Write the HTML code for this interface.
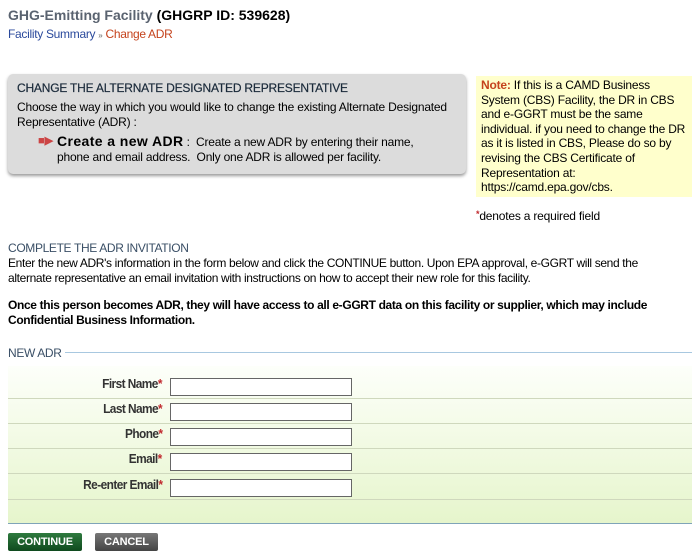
<!DOCTYPE html>
<html><head><style>
body{margin:0;width:700px;height:560px;background:#fff;font-family:"Liberation Sans",sans-serif;font-size:12px;color:#000;position:relative;overflow:hidden}
.a{position:absolute;white-space:nowrap}
.n{letter-spacing:-0.35px}
.star{color:#c0282d;font-weight:bold}
.row{position:absolute;left:8px;width:684px;height:25px;border-bottom:1px solid #cfd8bd}
.lbl{position:absolute;right:530px;top:4px;font-weight:bold;color:#333;letter-spacing:-0.6px;font-size:12.5px;transform:scaleX(0.95);transform-origin:right}
.inp{position:absolute;left:162px;top:5px;width:180px;height:16px;border:1px solid #666;background:#fff}
.btn{position:absolute;top:533px;height:18px;border-radius:2px;color:#fff;font-weight:bold;font-size:11px;line-height:18px;text-align:center;letter-spacing:-0.2px}
</style></head><body>
<div class="a" style="left:8px;top:7px;font-size:14px;font-weight:bold;color:#5a6370">GHG-Emitting Facility <span style="color:#000">(GHGRP ID: 539628)</span></div>
<div class="a" style="left:8px;top:27px;color:#2b4a9c;letter-spacing:-0.3px">Facility Summary <span style="font-size:8px;color:#666">»</span> <span style="color:#c5431d">Change ADR</span></div>

<div style="position:absolute;left:8px;top:74px;width:458px;height:100px;background:#dcdcdc;border-radius:5px;box-shadow:0 2px 3px #999"></div>
<div class="a" style="left:17px;top:81px;color:#1a2a3a;letter-spacing:-0.2px;-webkit-text-stroke:0.2px #1a2a3a">CHANGE THE ALTERNATE DESIGNATED REPRESENTATIVE</div>
<div class="a" style="left:17px;top:100px;line-height:15px;letter-spacing:-0.2px">Choose the way in which you would like to change the existing Alternate Designated<br>Representative (ADR) :</div>
<div class="a" style="left:38px;top:134px;color:#c44;font-size:11px;font-weight:bold">■▶</div>
<div class="a" style="left:57px;top:134px;line-height:15px;letter-spacing:-0.2px"><b style="font-size:14px;letter-spacing:0.4px">Create a new ADR</b> :&nbsp; Create a new ADR by entering their name,<br>phone and email address.&nbsp; Only one ADR is allowed per facility.</div>

<div style="position:absolute;left:476px;top:76px;width:216px;height:121px;background:#ffffcc"></div>
<div class="a" style="left:481px;top:78px;line-height:14.6px;letter-spacing:-0.2px"><b style="color:#c5431d">Note:</b> If this is a CAMD Business<br>System (CBS) Facility, the DR in CBS<br>and e-GGRT must be the same<br>individual. if you need to change the DR<br>as it is listed in CBS, Please do so by<br>revising the CBS Certificate of<br>Representation at:<br>https://camd.epa.gov/cbs.</div>
<div class="a" style="left:476px;top:209px;letter-spacing:-0.2px"><span class="star" style="font-size:9px;vertical-align:top">*</span>denotes a required field</div>

<div class="a n" style="left:8px;top:241px;color:#3a4f66">COMPLETE THE ADR INVITATION</div>
<div class="a n" style="left:8px;top:256px;line-height:15px">Enter the new ADR's information in the form below and click the CONTINUE button. Upon EPA approval, e-GGRT will send the<br>alternate representative an email invitation with instructions on how to accept their new role for this facility.</div>
<div class="a n" style="left:8px;top:298px;line-height:15px;font-weight:bold">Once this person becomes ADR, they will have access to all e-GGRT data on this facility or supplier, which may include<br>Confidential Business Information.</div>

<div class="a n" style="left:8px;top:346px;color:#3a4f66;background:#fff;padding-right:3px;z-index:2">NEW ADR</div>
<div style="position:absolute;left:60px;top:352px;width:632px;border-top:1px solid #a8c8e0"></div>
<div style="position:absolute;left:8px;top:366px;width:684px;height:157px;background:linear-gradient(#fdfffa,#e6f5cc);border-bottom:1px solid #7fa4b8"></div>
<div class="row" style="top:373px"><div class="lbl">First Name<span class="star">*</span></div><div class="inp"></div></div>
<div class="row" style="top:398px"><div class="lbl">Last Name<span class="star">*</span></div><div class="inp"></div></div>
<div class="row" style="top:423px"><div class="lbl">Phone<span class="star">*</span></div><div class="inp"></div></div>
<div class="row" style="top:448px"><div class="lbl">Email<span class="star">*</span></div><div class="inp"></div></div>
<div class="row" style="top:474px"><div class="lbl">Re-enter Email<span class="star">*</span></div><div class="inp"></div></div>

<div class="btn" style="left:8px;width:74px;background:linear-gradient(#2e7a3e,#0f4a1e)">CONTINUE</div>
<div class="btn" style="left:95px;width:63px;background:linear-gradient(#777,#444)">CANCEL</div>
</body></html>
